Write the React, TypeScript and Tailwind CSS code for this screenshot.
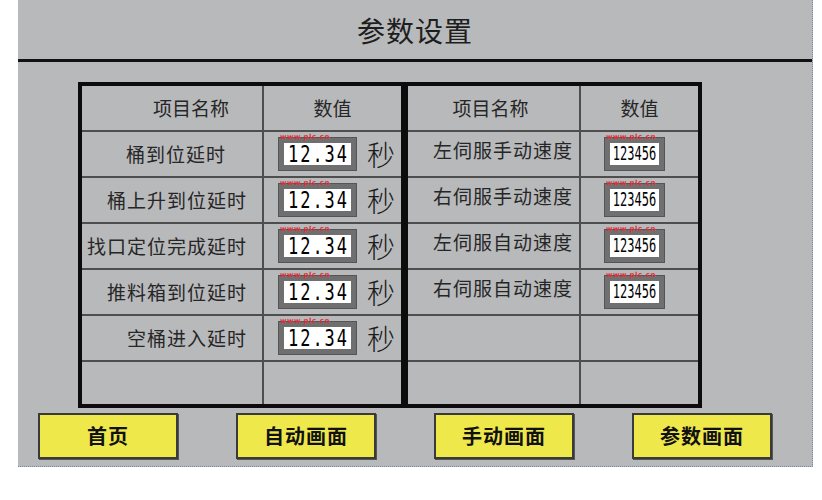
const CJK = "font-['Noto_Sans_CJK_SC',sans-serif]";

type Row = { name: string };

const leftRows: Row[] = [
  { name: "桶到位延时" },
  { name: "桶上升到位延时" },
  { name: "找口定位完成延时" },
  { name: "推料箱到位延时" },
  { name: "空桶进入延时" },
];

const rightRows: Row[] = [
  { name: "左伺服手动速度" },
  { name: "右伺服手动速度" },
  { name: "左伺服自动速度" },
  { name: "右伺服自动速度" },
];

function Watermark() {
  return (
    <span className="absolute -top-[4px] left-[1px] text-[7px] leading-none font-bold text-[#e0303a] font-['DejaVu_Sans',sans-serif] tracking-[0.5px]">
      www.plc.cn
    </span>
  );
}

function SecondsBox() {
  return (
    <div className="flex items-center h-full pl-[14px]">
      <div className="relative w-[79px] h-[34px] bg-[#6f6f6f] p-[5px] border border-[#555]">
        <div className="w-full h-full bg-white flex items-center justify-center">
          <span className="font-['DejaVu_Sans_Mono',monospace] text-[17px] leading-none text-black scale-y-[1.35] tracking-[2px] pl-[2px]">
            12.34
          </span>
        </div>
        <Watermark />
      </div>
      <span className={`${CJK} font-light ml-[10px] text-[28px] leading-none text-[#1a1a1a]`}>秒</span>
    </div>
  );
}

function SpeedBox() {
  return (
    <div className="flex items-center h-full pl-[23px]">
      <div className="relative w-[61px] h-[34px] bg-[#707070] p-[5px] border border-[#555]">
        <div className="w-full h-full bg-white flex items-center justify-center">
          <span className="font-['DejaVu_Sans_Mono',monospace] text-[12px] leading-none text-black scale-y-[1.6]">
            123456
          </span>
        </div>
        <Watermark />
      </div>
    </div>
  );
}

function Cell({
  children,
  last,
  divider,
}: {
  children?: React.ReactNode;
  last?: boolean;
  divider?: boolean;
}) {
  return (
    <div
      className={`${last ? "h-[42px]" : "h-[46px] border-b-2 border-b-[#4e4e4e]"} ${
        divider ? "border-l-2 border-l-[#4e4e4e]" : ""
      }`}
    >
      {children}
    </div>
  );
}

const nameCls = `${CJK} text-[19px] text-[#262626] flex items-center h-full`;

function LeftHalf() {
  const rows = [...leftRows, { name: "" }];
  return (
    <div className="grid grid-cols-[180px_139px]">
      <Cell>
        <div className={`${nameCls} justify-center pl-[38px]`}>项目名称</div>
      </Cell>
      <Cell divider>
        <div className={`${nameCls} justify-center`}>数值</div>
      </Cell>
      {rows.map((r, i) => {
        const last = i === rows.length - 1;
        return [
          <Cell key={`n${i}`} last={last}>
            <div
              className={`${nameCls} justify-end tracking-[1px] ${
                i === 0 ? "pr-[36px]" : "pr-[15px]"
              }`}
            >
              {r.name}
            </div>
          </Cell>,
          <Cell key={`v${i}`} last={last} divider>
            {r.name && <SecondsBox />}
          </Cell>,
        ];
      })}
    </div>
  );
}

function RightHalf() {
  const rows = [...rightRows, { name: "" }, { name: "" }];
  return (
    <div className="grid grid-cols-[171px_119px]">
      <Cell>
        <div className={`${nameCls} justify-center pr-[6px]`}>项目名称</div>
      </Cell>
      <Cell divider>
        <div className={`${nameCls} justify-center`}>数值</div>
      </Cell>
      {rows.map((r, i) => {
        const last = i === rows.length - 1;
        return [
          <Cell key={`n${i}`} last={last}>
            <div className={`${nameCls} justify-end pr-[6px] tracking-[1px] -mt-[4px]`}>{r.name}</div>
          </Cell>,
          <Cell key={`v${i}`} last={last} divider>
            {r.name && <SpeedBox />}
          </Cell>,
        ];
      })}
    </div>
  );
}

const buttons = ["首页", "自动画面", "手动画面", "参数画面"];

export default function App() {
  return (
    <div className="w-[822px] h-[500px] bg-white overflow-hidden">
      <div className="ml-[18px] w-[795px] h-[467px] bg-[#b8b9bb] border-r border-b border-dotted border-[#7d86a6] flex flex-col">
        <div className="h-[59px] flex items-center justify-center">
          <span className={`${CJK} text-[28px] text-[#1e1e1e] tracking-[1px]`}>参数设置</span>
        </div>
        <div className="h-[3px] bg-[#111]" />
        <div className="mt-[20px] ml-[60px] flex w-fit border-4 border-[#0c0c0c]">
          <LeftHalf />
          <div className="w-[7px] bg-[#0c0c0c]" />
          <RightHalf />
        </div>
        <div className="mt-[5px] pl-[20px] flex gap-[58px]">
          {buttons.map((b) => (
            <div
              key={b}
              className="w-[140px] h-[46px] bg-[#eee84a] border-2 border-[#3a3a3a] shadow-[1px_1px_0_#555] flex items-center justify-center"
            >
              <span className={`${CJK} font-bold text-[20px] text-[#111] tracking-[1px]`}>{b}</span>
            </div>
          ))}
        </div>
      </div>
    </div>
  );
}
